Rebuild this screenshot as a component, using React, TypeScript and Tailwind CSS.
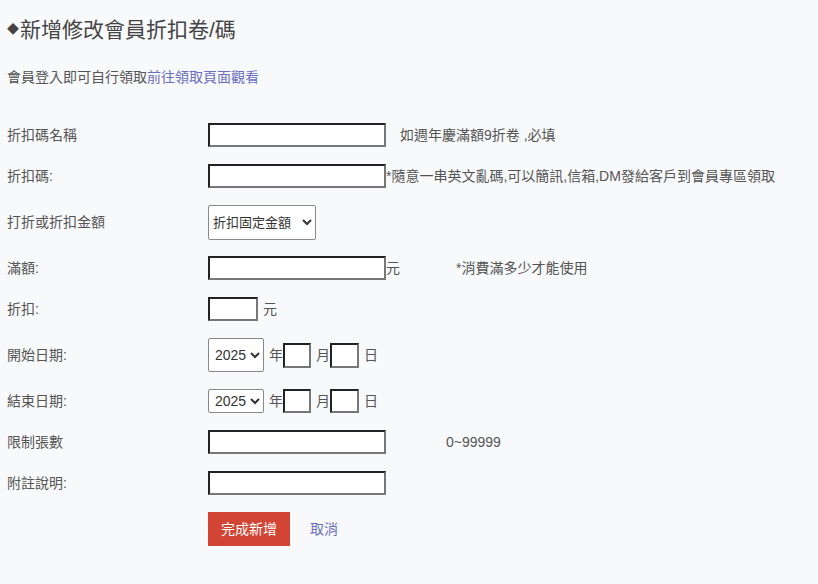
const inputCls =
  "h-6 bg-white border-2 border-t-[#222] border-l-[#222] border-b-[#777] border-r-[#777] outline-none px-1 text-[13px]";

function Row({ label, h, children }: { label: string; h: string; children: React.ReactNode }) {
  return (
    <div className={`flex items-center ${h}`}>
      <div className="w-[201px] shrink-0 text-[14px] text-[#555]">{label}</div>
      <div className="flex items-center text-[14px] text-[#555]">{children}</div>
    </div>
  );
}

function YearSelect({ tall }: { tall?: boolean }) {
  return (
    <select
      defaultValue="2025"
      className={`${tall ? "h-[34px]" : "h-6"} w-14 bg-white border border-[#888] rounded-[2px] text-[14px] text-[#333] pl-[2px]`}
    >
      <option>2024</option>
      <option>2025</option>
      <option>2026</option>
    </select>
  );
}

export default function App() {
  return (
    <div
      className="min-h-[584px] bg-[#f8f9fb] pl-[7px] pt-[18px]"
      style={{ fontFamily: '"Liberation Sans", Arial, "Noto Sans CJK TC", sans-serif' }}
    >
      <h1 className="text-[21px] leading-6 text-[#444] flex items-center">
        <span className="text-[12px] mr-[1px]">◆</span>新增修改會員折扣卷/碼
      </h1>
      <p className="mt-[27px] text-[14px] text-[#555] leading-4">
        會員登入即可自行領取<a href="#" className="text-[#6a6fc0]">前往領取頁面觀看</a>
      </p>

      <div className="mt-[38px] flex flex-col gap-[17px]">
        <Row label="折扣碼名稱" h="h-6">
          <input className={`${inputCls} w-[178px]`} />
          <span className="ml-[14px]">如週年慶滿額9折卷 ,必填</span>
        </Row>
        <Row label="折扣碼:" h="h-6">
          <input className={`${inputCls} w-[178px]`} />
          <span>*隨意一串英文亂碼,可以簡訊,信箱,DM發給客戶到會員專區領取</span>
        </Row>
        <Row label="打折或折扣金額" h="h-[35px] -mb-px">
          <select className="h-[35px] w-[108px] bg-white border border-[#888] rounded-[2px] text-[13px] text-[#333] pl-0">
            <option>折扣固定金額</option>
            <option>打折</option>
          </select>
        </Row>
        <Row label="滿額:" h="h-6">
          <input className={`${inputCls} w-[178px]`} />
          <span>元</span>
          <span className="ml-[56px]">*消費滿多少才能使用</span>
        </Row>
        <Row label="折扣:" h="h-6">
          <input className={`${inputCls} w-[50px]`} />
          <span className="ml-[5px]">元</span>
        </Row>
        <Row label="開始日期:" h="h-[34px]">
          <YearSelect tall />
          <span className="ml-[5px]">年</span>
          <input className={`${inputCls} w-[28px] h-[25px]`} />
          <span className="ml-[5px]">月</span>
          <input className={`${inputCls} w-[29px] h-[25px]`} />
          <span className="ml-[5px]">日</span>
        </Row>
        <Row label="結束日期:" h="h-6">
          <YearSelect />
          <span className="ml-[5px]">年</span>
          <input className={`${inputCls} w-[28px]`} />
          <span className="ml-[5px]">月</span>
          <input className={`${inputCls} w-[29px]`} />
          <span className="ml-[5px]">日</span>
        </Row>
        <Row label="限制張數" h="h-6">
          <input className={`${inputCls} w-[178px]`} />
          <span className="ml-[60px]">0~99999</span>
        </Row>
        <Row label="附註說明:" h="h-6">
          <input className={`${inputCls} w-[178px]`} />
        </Row>
        <Row label="" h="h-[34px]">
          <button className="h-[34px] w-[82px] bg-[#d24535] text-white text-[14px]">完成新增</button>
          <a href="#" className="ml-[20px] text-[#6a6fc0]">取消</a>
        </Row>
      </div>
    </div>
  );
}
